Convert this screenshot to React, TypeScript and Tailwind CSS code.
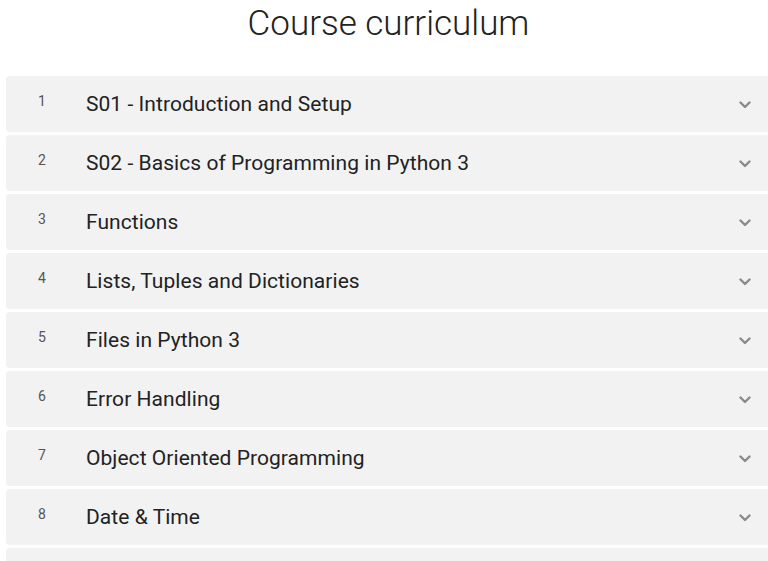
import React from 'react';

const sections: string[] = [
  'S01 - Introduction and Setup',
  'S02 - Basics of Programming in Python 3',
  'Functions',
  'Lists, Tuples and Dictionaries',
  'Files in Python 3',
  'Error Handling',
  'Object Oriented Programming',
  'Date & Time',
];

const Chevron: React.FC = () => (
  <svg width="12" height="8" viewBox="0 0 12 8" className="text-[#8a8a8a]">
    <path d="M1.5 1.5 L6 6 L10.5 1.5" fill="none" stroke="currentColor" strokeWidth="2.4" strokeLinecap="round" strokeLinejoin="round" />
  </svg>
);

export default function App() {
  return (
    <div className="w-[768px] h-[561px] overflow-hidden bg-white font-['Roboto',sans-serif]">
      <h1 className="h-[76px] pt-[2px] pl-[9px] text-center text-[35px] leading-[44px] font-light text-[#222]">
        Course curriculum
      </h1>
      <div className="flex flex-col gap-[3px] pl-[6px]">
        {sections.map((title, i) => (
          <div
            key={title}
            className="flex items-center h-[56px] w-[775px] rounded-[4px] bg-[#f2f2f2]"
          >
            <span className="w-[80px] pl-[32px] -mt-[6px] text-[14px] text-[#555]">{i + 1}</span>
            <span className="flex-1 pt-[2px] text-[21px] tracking-[0.05px] text-[#222]">{title}</span>
            <span className="pr-[30px] pt-[2px]"><Chevron /></span>
          </div>
        ))}
        <div className="h-[56px] w-[775px] rounded-[4px] bg-[#f2f2f2]" />
      </div>
    </div>
  );
}
